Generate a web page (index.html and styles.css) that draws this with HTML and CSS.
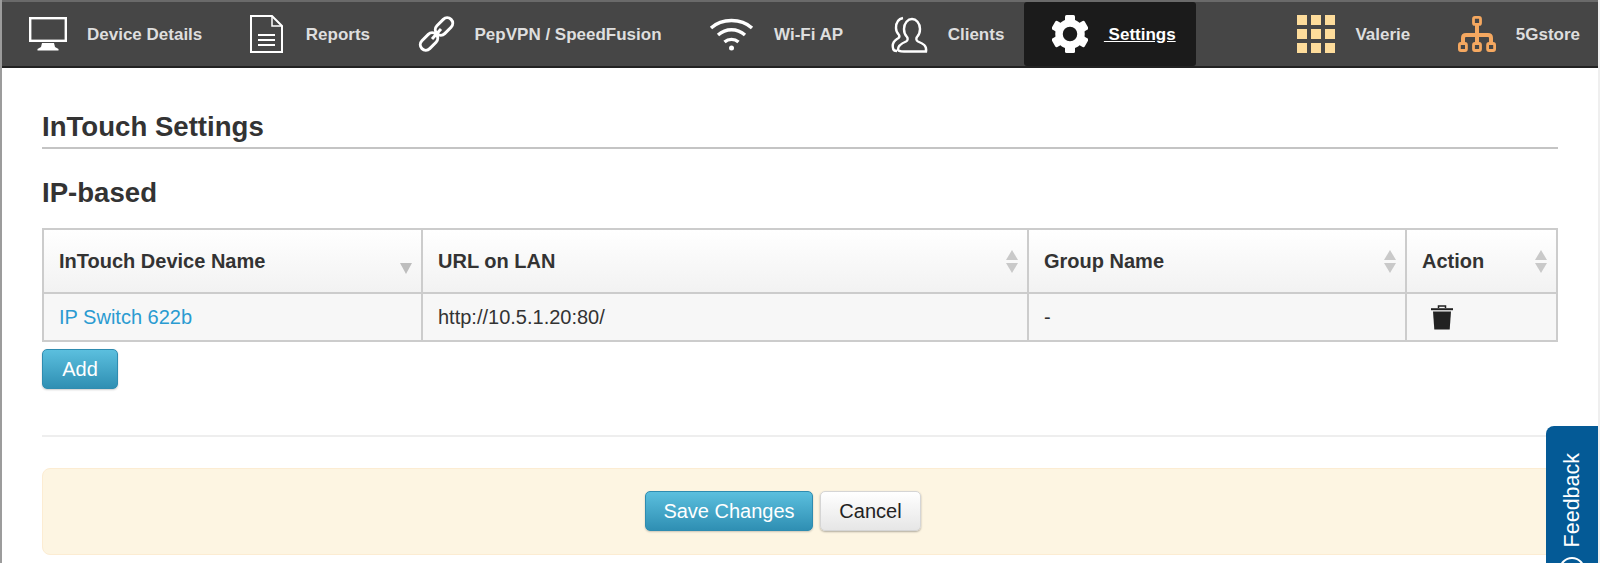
FILE: index.html
```html
<!DOCTYPE html>
<html lang="en">
<head>
    <meta charset="UTF-8">
    <title>InTouch Settings</title>
    <link rel="stylesheet" href="styles.css">
</head>
<body>
    <nav class="topnav">
        <a class="nav-item">
            <svg class="nav-icon" width="38" height="34" viewBox="0 0 38 34">
                <rect x="1.2" y="1.2" width="35.6" height="22.6" fill="none" stroke="#fff" stroke-width="2.4"/>
                <path d="M13 26h12l1 4 3.5 2v1.5h-21V32l3.500-2z" fill="#fff"/>
            </svg>
            <span class="nav-label">Device Details</span>
        </a>
        <a class="nav-item nav-item-reports">
            <svg class="nav-icon" width="33" height="38" viewBox="0 0 33 38">
                <path d="M1 1h21l10 10v26H1z" fill="none" stroke="#fff" stroke-width="2"/>
                <path d="M22 1v10h10" fill="none" stroke="#fff" stroke-width="1.500"/>
                <path d="M8 20h17M8 25h17M8 30h17" stroke="#fff" stroke-width="2"/>
            </svg>
            <span class="nav-label">Reports</span>
        </a>
        <a class="nav-item">
            <svg class="nav-icon" width="37" height="38" viewBox="0 0 37 38">
                <g fill="none" stroke="#fff" stroke-width="3">
                    <rect x="16" y="6" width="20" height="11" rx="5.500" transform="rotate(-45 26 11.500)"/>
                    <rect x="1" y="21" width="20" height="11" rx="5.500" transform="rotate(-45 11 26.500)"/>
                    <path d="M14 24l9-10"/>
                </g>
            </svg>
            <span class="nav-label">PepVPN / SpeedFusion</span>
        </a>
        <a class="nav-item">
            <svg class="nav-icon" width="45" height="34" viewBox="0 0 45 34">
                <g fill="none" stroke="#fff" stroke-width="3.400">
                    <path d="M2 11C13 1 32 1 43 11"/>
                    <path d="M9 18c8-7 19-7 27 0"/>
                    <path d="M15.500 25c4-3.500 10-3.500 14 0"/>
                </g>
                <circle cx="22.500" cy="31" r="2.500" fill="#fff"/>
            </svg>
            <span class="nav-label">Wi-Fi AP</span>
        </a>
        <a class="nav-item">
            <svg class="nav-icon" width="37" height="37" viewBox="0 0 37 37">
                <g fill="none" stroke="#fff" stroke-width="2.400">
                    <path d="M13 35.500h22c1-6-3-8-8-10-2-1-2-3-1-4.500 2-2 3-5 3-8 0-6-4-10-8-10s-8 4-8 10c0 3 1 6 3 8 1 1.500 1 3.500-1 4.500-5 2-8 4-8 8 0 1 2 2 6 2z"/>
                    <path d="M12 2C7 3 5 7 5 12c0 3 1 5 3 7 1 2 0 3-2 4-3 2-5 5-4 9 0 2 2 3 4 3"/>
                </g>
            </svg>
            <span class="nav-label">Clients</span>
        </a>
        <a class="nav-item nav-item-active">
            <svg class="nav-icon" width="36" height="38" viewBox="-18 -19 36 38">
                <g fill="#fff">
                    <rect x="-5" y="-19" width="10" height="8" rx="1.500"/>
                    <rect x="-5" y="-19" width="10" height="8" rx="1.500" transform="rotate(60)"/>
                    <rect x="-5" y="-19" width="10" height="8" rx="1.500" transform="rotate(120)"/>
                    <rect x="-5" y="-19" width="10" height="8" rx="1.500" transform="rotate(180)"/>
                    <rect x="-5" y="-19" width="10" height="8" rx="1.500" transform="rotate(240)"/>
                    <rect x="-5" y="-19" width="10" height="8" rx="1.500" transform="rotate(300)"/>
                </g>
                <circle r="11" fill="none" stroke="#fff" stroke-width="7.500"/>
            </svg>
            <span class="nav-label nav-active-label">&nbsp;Settings</span>
        </a>
        <a class="nav-item nav-item-right">
            <svg class="nav-icon" width="38" height="38" viewBox="0 0 38 38" fill="#fddc9b">
                <rect x="0" y="0" width="10" height="10"/><rect x="14" y="0" width="10" height="10"/><rect x="28" y="0" width="10" height="10"/>
                <rect x="0" y="14" width="10" height="10"/><rect x="14" y="14" width="10" height="10"/><rect x="28" y="14" width="10" height="10"/>
                <rect x="0" y="28" width="10" height="10"/><rect x="14" y="28" width="10" height="10"/><rect x="28" y="28" width="10" height="10"/>
            </svg>
            <span class="nav-label">Valerie</span>
        </a>
        <a class="nav-item">
            <svg class="nav-icon" width="38" height="36" viewBox="0 0 38 36">
                <g fill="none" stroke="#f5a860" stroke-width="2.800">
                    <rect x="15.500" y="1.400" width="7" height="7" rx="1.500"/>
                    <rect x="1.400" y="27.500" width="7" height="7" rx="1.500"/>
                    <rect x="15.500" y="27.500" width="7" height="7" rx="1.500"/>
                    <rect x="29.600" y="27.500" width="7" height="7" rx="1.500"/>
                </g>
                <path d="M19 8v19M5 27v-5q0-3 3-3h22q3 0 3 3v5" fill="none" stroke="#f5a860" stroke-width="4"/>
            </svg>
            <span class="nav-label">5Gstore</span>
        </a>
    </nav>

    <main class="content">
        <h2 class="page-title">InTouch Settings</h2>
        <h3 class="section-title">IP-based</h3>

        <table class="data-table">
            <colgroup>
                <col class="col-name">
                <col class="col-url">
                <col class="col-group">
                <col class="col-action">
            </colgroup>
            <thead>
                <tr>
                    <th>InTouch Device Name<span class="sort-down"></span></th>
                    <th>URL on LAN<span class="sort-both"></span></th>
                    <th>Group Name<span class="sort-both"></span></th>
                    <th>Action<span class="sort-both"></span></th>
                </tr>
            </thead>
            <tbody>
                <tr>
                    <td><a class="link">IP Switch 622b</a></td>
                    <td>http://10.5.1.20:80/</td>
                    <td>-</td>
                    <td>
                        <svg class="trash" width="22" height="25" viewBox="0 0 22 25">
                            <path d="M7.500 3V1h7v2" fill="none" stroke="#222" stroke-width="1.500"/>
                            <path d="M0 3.200h22v2H0z" fill="#222"/>
                            <path d="M2 6.500h18l-1.300 18H3.300z" fill="#222"/>
                        </svg>
                    </td>
                </tr>
            </tbody>
        </table>

        <button class="btn btn-blue btn-add">Add</button>

        <hr class="divider">

        <div class="form-actions">
            <button class="btn btn-blue btn-save">Save Changes</button>
            <button class="btn btn-plain btn-cancel">Cancel</button>
        </div>
    </main>

    <div class="feedback">
        <span class="feedback-label">Feedback</span>
        <span class="feedback-circle"></span>
    </div>
</body>
</html>
```

FILE: styles.css
```css
html, body {
    margin: 0;
    padding: 0;
    height: 563px;
    overflow: hidden;
}

body {
    position: relative;
    font-family: "Liberation Sans", Arial, sans-serif;
    color: #333;
    background-color: #fff;
    box-sizing: border-box;
    border-left: 2px solid #9c9c9c;
    border-right: 2px solid #efefef;
}

.topnav {
    display: flex;
    align-items: center;
    height: 64px;
    margin-left: -2px;
    margin-right: -2px;
    padding-left: 29px;
    background-color: #464646;
    border-top: 2px solid #6a6a6a;
    border-bottom: 2px solid #222;
}

.nav-item {
    display: flex;
    align-items: center;
    gap: 20px;
    height: 100%;
    margin-right: 47.5px;
    color: #dedede;
    font-size: 17px;
    font-weight: bold;
}

.nav-label {
    padding-top: 2px;
}

.nav-item-reports {
    gap: 23px;
}

.nav-item-active {
    gap: 16px;
    margin-left: -28px;
    margin-right: 0;
    padding: 0 20px 0 28px;
    background-color: #1b1b1b;
    border-radius: 3px;
    color: #fff;
}

.nav-active-label {
    text-decoration: underline;
}

.nav-item-right {
    margin-left: auto;
}

.nav-item:last-child {
    margin-right: 20px;
}

.nav-icon {
    flex-shrink: 0;
}

.content {
    padding: 0 40px;
}

.page-title {
    margin: 0;
    padding: 44px 0 5px;
    font-size: 27.6px;
    line-height: 30px;
    border-bottom: 2px solid #c4c4c4;
}

.section-title {
    margin: 0;
    padding-top: 29px;
    font-size: 27.6px;
    line-height: 30px;
}

.data-table {
    width: 1514px;
    margin-top: 20px;
    table-layout: fixed;
    border-collapse: collapse;
    font-size: 20px;
}

.col-name {
    width: 379px;
}

.col-group {
    width: 378px;
}

.col-url {
    width: 606px;
}

.col-action {
    width: 151px;
}

.data-table th,
.data-table td {
    border: 2px solid #ccc;
    padding: 0 15px;
    text-align: left;
}

.data-table th {
    position: relative;
    height: 62px;
    font-size: 20px;
    background: linear-gradient(#fff, #f2f2f2);
}

.data-table td {
    height: 46px;
    background-color: #f7f7f7;
}

.link {
    color: #2a9bd1;
}

.sort-down,
.sort-both,
.sort-both::after {
    position: absolute;
    right: 9px;
    width: 0;
    height: 0;
    border-left: 6px solid transparent;
    border-right: 6px solid transparent;
}

.sort-down {
    top: 33px;
    border-top: 11px solid #bdbdbd;
}

.sort-both {
    top: 20px;
    border-bottom: 10px solid #c9c9c9;
}

.sort-both::after {
    content: "";
    top: 13px;
    right: -6px;
    border-top: 10px solid #c9c9c9;
}

.trash {
    display: block;
    margin-left: 9px;
}

.btn {
    font-family: inherit;
    font-size: 20px;
    height: 40px;
    padding: 0;
    border-radius: 5px;
}

.btn-blue {
    color: #fff;
    background: linear-gradient(#5bbfde, #2f8fb3);
    border: 1px solid #2f8cb0;
    box-shadow: 0 1px 2px rgba(0, 0, 0, 0.2);
}

.btn-plain {
    color: #222;
    background: linear-gradient(#fff, #e6e6e6);
    border: 1px solid #d5d5d5;
    box-shadow: 0 1px 2px rgba(0, 0, 0, 0.3);
}

.btn-add {
    display: block;
    width: 76px;
    margin-top: 7px;
}

.btn-save {
    width: 168px;
}

.btn-cancel {
    width: 101px;
}

.divider {
    margin: 46px 0 0;
    border: none;
    border-top: 2px solid #eee;
}

.form-actions {
    display: flex;
    justify-content: center;
    gap: 7px;
    margin-top: 31px;
    padding: 22px 34px 22px 0;
    height: 41px;
    background-color: #fdf5e2;
    border: 1px solid #fcecd2;
    border-radius: 8px;
}

.feedback {
    position: absolute;
    top: 426px;
    right: 0;
    width: 52px;
    height: 160px;
    background-color: #045a96;
    border-radius: 8px 0 0 0;
}

.feedback-label {
    position: absolute;
    top: 27px;
    left: 14px;
    writing-mode: vertical-rl;
    transform: rotate(180deg);
    color: #fff;
    font-size: 21.5px;
    line-height: 24px;
}

.feedback-circle {
    position: absolute;
    top: 131px;
    left: 13px;
    width: 22px;
    height: 22px;
    border: 2px solid #fff;
    border-radius: 50%;
}
```
